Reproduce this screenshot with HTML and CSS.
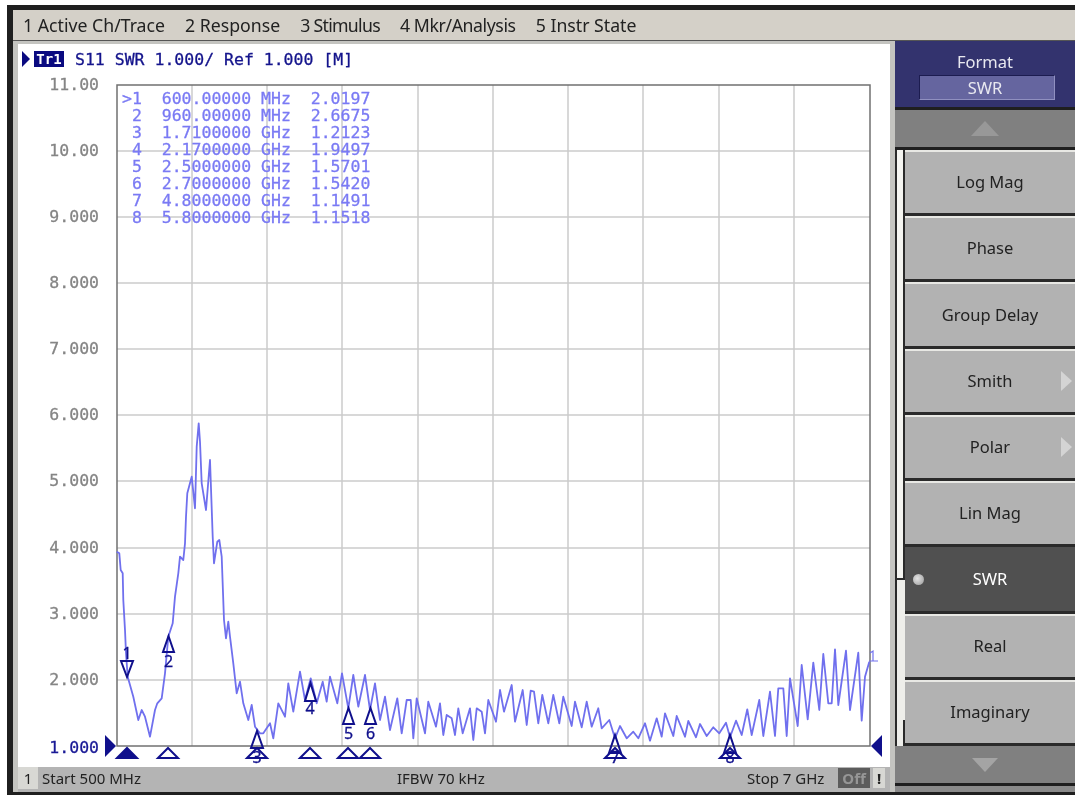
FILE: index.html
```html
<!DOCTYPE html>
<html lang="en">
<head>
    <meta charset="UTF-8">
    <meta name="viewport" content="width=device-width, initial-scale=1.0">
    <title>SWR Trace</title>
    <link rel="stylesheet" href="styles.css">
</head>
<body>
    <div class="screen">
        <nav class="menu-bar">
            <span>1 Active Ch/Trace</span>
            <span>2 Response</span>
            <span>3 Stimulus</span>
            <span>4 Mkr/Analysis</span>
            <span>5 Instr State</span>
        </nav>
        <div class="main">
            <section class="chart-panel">
                <div class="chart-area">
                    <div class="trace-title">
                        <span class="trace-arrow"></span>
                        <span class="trace-tag">Tr1</span>
                        <span class="trace-text">S11 SWR 1.000/ Ref 1.000 [M]</span>
                    </div>
                    <svg class="plot" viewBox="18 74 872 693" width="872" height="693">
                        <g class="grid">
                            <line x1="117" x2="870" y1="151" y2="151"/>
                            <line x1="117" x2="870" y1="217" y2="217"/>
                            <line x1="117" x2="870" y1="283" y2="283"/>
                            <line x1="117" x2="870" y1="349" y2="349"/>
                            <line x1="117" x2="870" y1="415" y2="415"/>
                            <line x1="117" x2="870" y1="481" y2="481"/>
                            <line x1="117" x2="870" y1="548" y2="548"/>
                            <line x1="117" x2="870" y1="614" y2="614"/>
                            <line x1="117" x2="870" y1="680" y2="680"/>
                            <line x1="192" x2="192" y1="85" y2="746"/>
                            <line x1="267" x2="267" y1="85" y2="746"/>
                            <line x1="342" x2="342" y1="85" y2="746"/>
                            <line x1="418" x2="418" y1="85" y2="746"/>
                            <line x1="493" x2="493" y1="85" y2="746"/>
                            <line x1="568" x2="568" y1="85" y2="746"/>
                            <line x1="643" x2="643" y1="85" y2="746"/>
                            <line x1="719" x2="719" y1="85" y2="746"/>
                            <line x1="794" x2="794" y1="85" y2="746"/>
                        </g>
                        <rect class="frame" x="117" y="85" width="753" height="661"/>

                        <g class="y-labels">
                            <text x="99" y="90">11.00</text>
                            <text x="99" y="156">10.00</text>
                            <text x="99" y="222">9.000</text>
                            <text x="99" y="288">8.000</text>
                            <text x="99" y="354">7.000</text>
                            <text x="99" y="420">6.000</text>
                            <text x="99" y="486">5.000</text>
                            <text x="99" y="553">4.000</text>
                            <text x="99" y="619">3.000</text>
                            <text x="99" y="685">2.000</text>
                            <text class="y-ref" x="99" y="753">1.000</text>
                        </g>

                        <g class="marker-table">
                            <text x="122" y="104">&gt;1  600.00000 MHz  2.0197</text>
                            <text x="122" y="121"> 2  960.00000 MHz  2.6675</text>
                            <text x="122" y="138"> 3  1.7100000 GHz  1.2123</text>
                            <text x="122" y="155"> 4  2.1700000 GHz  1.9497</text>
                            <text x="122" y="172"> 5  2.5000000 GHz  1.5701</text>
                            <text x="122" y="189"> 6  2.7000000 GHz  1.5420</text>
                            <text x="122" y="206"> 7  4.8000000 GHz  1.1491</text>
                            <text x="122" y="223"> 8  5.8000000 GHz  1.1518</text>
                        </g>

                        <polyline class="trace" points="116.7,551.7 119.3,553.3 120.7,570 122.7,573.3 123.3,600 125,630 126,653.3 127.7,676.7 130,685 133.3,696.7 138.3,720 141.7,710 145,716.7 150,736.7 155,710 157.3,703.3 161.7,698.3 165,673.3 168.3,636.7 172.7,623.3 175,596.7 178.3,573.3 180,556.7 183.3,560 185,543.3 186,516.7 187.3,493.3 191.7,476.7 195,508.3 196.7,446.7 198.7,423.3 200,441.7 201.7,483.3 206,510 210,460 212.7,536.7 214,563.3 217.3,541.7 219.3,540 221.7,556.7 224,620 226,638.3 228.3,621.7 230,636.7 233.3,663.3 236.7,693.3 240,681.7 243.3,703.3 248.3,720 251.7,705 255,726.7 260,733.3 263.3,733.3 270,723.3 273.3,738.3 278.3,703.3 285,716.7 288.3,683.3 293.3,711.7 300,671.7 305,700 310.7,678.3 316.7,703.3 322.7,681.7 326.7,701.7 330,676.7 337.3,703.3 342,673.3 348.3,708.3 353.3,675 358.3,706.7 365,675 370,710 375,683.3 380,720 385,696.7 390,730 397.3,698.3 401.7,733.3 406.7,700 410.7,700 413.3,738.3 416.7,698.3 425,733.3 428.3,701.7 436,726.7 440,703.3 443.3,735 446.7,715 451.7,718.3 455,735 458.3,708.3 462.7,733.3 470,708.3 473.3,740 476.7,708.3 481.7,711.7 485,733.3 488.3,700 496,721.7 500,690 504,711.7 511.7,685 515,721.7 522.7,690 526.7,725 530.7,690.7 534,691.7 538.3,723.3 542.3,695 548.3,723.3 553.3,695 559.3,723.3 563.3,696.7 571.7,726 575,701.7 581.7,727.3 586.7,701.7 591.7,726.7 598.3,708.3 601.7,728.3 609.3,720 615,738.3 620,726 626.7,738.3 633.3,731.7 638.3,738.3 645,723.3 650,740.7 656.7,718.3 661.7,736.7 665,713.3 673.3,736 676.7,716 685,736.7 688.3,721 696,737.3 700,724 706.7,736 713.3,727.3 719.3,733.3 726,722.7 730,737.3 736,720.7 741.7,735 747.3,709.3 751.7,735 759.3,700 763.3,736 770,691.7 775,736 778.3,688.3 783.3,688.3 786.7,736 790,678.3 797.7,726 801.7,665 807.7,719.3 813.3,662.7 819.3,710 823.3,654 828.3,703.3 831.7,703.3 835,649.3 838.3,705 846,650.7 850,710 858.3,652.7 861.7,720.7 865,676.7 869.3,661.7"/>
                        <path class="trace-end" d="M869 661H878M873 661V651L870 653"/>

                        <path class="ref-arrow" d="M105 735L116 746L105 757Z"/>
                        <path class="ref-arrow" d="M882 735V757L871 746Z"/>

                        <g class="markers">
                            <path class="marker-on" d="M117 758L127 748L137 758Z"/>
                            <path d="M158 758L168 748L178 758Z"/>
                            <path d="M247 758L257 748L267 758Z"/>
                            <path d="M300 758L310 748L320 758Z"/>
                            <path d="M338 758L348 748L358 758Z"/>
                            <path d="M360 758L370 748L380 758Z"/>
                            <path d="M605 758L615 748L625 758Z"/>
                            <path d="M720 758L730 748L740 758Z"/>

                            <path d="M121 661H133L127 677Z"/>
                            <path d="M163 652H174L168.500 636Z"/>
                            <path d="M251 748H263L257 731Z"/>
                            <path d="M305 701H316L310.500 683Z"/>
                            <path d="M343 724H354L348.500 708Z"/>
                            <path d="M365 724H376L370.500 708Z"/>
                            <path d="M609 753H621L615 735Z"/>
                            <path d="M724 753H736L730 735Z"/>
                        </g>
                        <g class="marker-labels">
                            <text x="127" y="659">1</text>
                            <text x="168.500" y="667">2</text>
                            <text x="257" y="763">3</text>
                            <text x="310" y="714">4</text>
                            <text x="348.500" y="739">5</text>
                            <text x="370.500" y="739">6</text>
                            <text x="615" y="763">7</text>
                            <text x="730" y="763">8</text>
                        </g>
                    </svg>
                </div>
                <footer class="status-bar">
                    <span class="channel-box">1</span>
                    <span class="status-start">Start 500 MHz</span>
                    <span class="status-ifbw">IFBW 70 kHz</span>
                    <span class="status-stop">Stop 7 GHz</span>
                    <span class="off-box">Off</span>
                    <span class="warn-box">!</span>
                </footer>
            </section>

            <aside class="softkeys">
                <div class="softkey-title">
                    <div>Format</div>
                    <div class="softkey-value">SWR</div>
                </div>
                <div class="page-button"><span class="arrow-up"></span></div>
                <div class="softkey-list">
                    <div class="scroll-strip">
                        <div class="scroll-track"></div>
                        <div class="scroll-end"></div>
                    </div>
                    <div class="softkey-column">
                        <div class="softkey">Log Mag</div>
                        <div class="softkey">Phase</div>
                        <div class="softkey">Group Delay</div>
                        <div class="softkey has-sub">Smith</div>
                        <div class="softkey has-sub">Polar</div>
                        <div class="softkey">Lin Mag</div>
                        <div class="softkey active">SWR</div>
                        <div class="softkey">Real</div>
                        <div class="softkey">Imaginary</div>
                    </div>
                </div>
                <div class="page-button"><span class="arrow-down"></span></div>
                <div class="softkey-foot"></div>
            </aside>
        </div>
    </div>
</body>
</html>
```

FILE: styles.css
```css
body {
    margin: 0;
    background-color: white;
    font-family: "Noto Sans", sans-serif;
}
.screen {
    width: 1068px;
    height: 790px;
    margin: 5px 0 0 7px;
    padding: 5px 0 3px 6px;
    box-sizing: border-box;
    background-color: #1f1f1f;
    display: flex;
    flex-direction: column;
    overflow: hidden;
    filter: blur(0.4px);
}
.menu-bar {
    height: 31px;
    flex-shrink: 0;
    background-color: #d4d0c8;
    display: flex;
    align-items: center;
    gap: 20px;
    padding-left: 10px;
    font-size: 17.700px;
    color: #222;
    border-bottom: 1px solid #555;
    box-sizing: border-box;
}
.menu-bar span:nth-child(3) {
    letter-spacing: -0.7px;
}
.menu-bar span:nth-child(4) {
    letter-spacing: -0.4px;
}
.main {
    display: flex;
    flex: 1;
    min-height: 0;
}
.chart-panel {
    width: 882px;
    flex-shrink: 0;
    box-sizing: border-box;
    padding: 3px 5px 0 5px;
    background-color: #c4c4c0;
    display: flex;
    flex-direction: column;
}
.chart-area {
    background-color: white;
    height: 723px;
}
.trace-title {
    height: 30px;
    display: flex;
    align-items: center;
    padding-left: 4px;
    font-family: "DejaVu Sans Mono", monospace;
    font-size: 16.500px;
    color: #14148c;
    -webkit-text-stroke: 0.3px #14148c;
}
.trace-arrow {
    width: 0;
    height: 0;
    border-left: 8px solid #0a0a80;
    border-top: 8px solid transparent;
    border-bottom: 8px solid transparent;
}
.trace-tag {
    background-color: #0a0a80;
    color: white;
    -webkit-text-stroke: 0;
    margin: 0 11px 0 4px;
    width: 30px;
    height: 16px;
    text-align: center;
    font-weight: bold;
    font-size: 14px;
    line-height: 16px;
}
.trace-text {
    white-space: pre;
}
.plot {
    display: block;
    overflow: visible;
}
.grid line {
    stroke: #cbcbcb;
    stroke-width: 1.500;
}
.frame {
    fill: none;
    stroke: #707070;
    stroke-width: 1.500;
}
.y-labels text {
    font-family: "DejaVu Sans Mono", monospace;
    font-size: 16.500px;
    fill: #858585;
    stroke: #858585;
    stroke-width: 0.3;
    text-anchor: end;
}
.y-labels .y-ref {
    fill: #1a1a96;
    stroke: #1a1a96;
}
.marker-table text {
    font-family: "DejaVu Sans Mono", monospace;
    font-size: 16.500px;
    fill: #7a7af4;
    stroke: #7a7af4;
    stroke-width: 0.3;
    white-space: pre;
}
.trace {
    fill: none;
    stroke: #7070ee;
    stroke-width: 1.800;
    stroke-linejoin: round;
}
.trace-end {
    fill: none;
    stroke: #7070ee;
    stroke-width: 1.200;
}
.ref-arrow {
    fill: #10108c;
}
.markers path {
    fill: none;
    stroke: #10108c;
    stroke-width: 2;
}
.markers .marker-on {
    fill: #10108c;
}
.marker-labels text {
    font-family: "Noto Sans", sans-serif;
    font-size: 16px;
    fill: #10108c;
    stroke: #10108c;
    stroke-width: 0.3;
    text-anchor: middle;
}
.status-bar {
    height: 25px;
    flex-shrink: 0;
    box-sizing: border-box;
    padding-bottom: 3px;
    display: flex;
    align-items: center;
    background-color: #b4b4b4;
    font-size: 15px;
    color: #222;
}
.channel-box {
    width: 20px;
    height: 22px;
    line-height: 22px;
    text-align: center;
    background-color: #d8d8d4;
}
.status-start {
    margin-left: 4px;
    width: 355px;
}
.status-ifbw {
    width: 350px;
}
.status-stop {
    width: 91px;
}
.off-box {
    width: 32px;
    height: 20px;
    line-height: 20px;
    text-align: center;
    background-color: #5c5c5c;
    color: #969696;
    font-weight: bold;
    margin-right: 3px;
}
.warn-box {
    width: 12px;
    height: 20px;
    line-height: 20px;
    text-align: center;
    font-weight: bold;
    background-color: #d8d8d4;
}
.softkeys {
    flex: 1;
    display: flex;
    flex-direction: column;
    gap: 3px;
    font-size: 16.500px;
}
.softkey-title {
    height: 66px;
    flex-shrink: 0;
    box-sizing: border-box;
    background-color: #33336e;
    color: #e8e8f0;
    text-align: center;
    padding-top: 9px;
    line-height: 24px;
}
.softkey-value {
    width: 136px;
    height: 25px;
    line-height: 24px;
    margin: 1px 0 0 24px;
    padding-right: 4px;
    box-sizing: border-box;
    background-color: #65659f;
    border: 1px solid #9090c0;
    border-top-color: #1c1c50;
    border-left-color: #1c1c50;
}
.page-button {
    height: 37px;
    flex-shrink: 0;
    background-color: #808080;
    display: flex;
    align-items: center;
    justify-content: center;
}
.arrow-up {
    width: 0;
    height: 0;
    border-left: 14px solid transparent;
    border-right: 14px solid transparent;
    border-bottom: 15px solid #989898;
}
.arrow-down {
    width: 0;
    height: 0;
    border-left: 13px solid transparent;
    border-right: 13px solid transparent;
    border-top: 14px solid #a4a4a4;
}
.softkey-foot {
    flex: 1;
    background-color: #8a8a8a;
}
.softkey-list {
    height: 596px;
    margin-bottom: -3px;
    flex-shrink: 0;
    display: flex;
}
.scroll-strip {
    width: 10px;
    flex-shrink: 0;
    box-sizing: border-box;
    border-left: 2px solid #2a2a2a;
    background-color: #eeeeea;
    display: flex;
    flex-direction: column;
    justify-content: space-between;
}
.scroll-track {
    height: 430px;
    box-sizing: border-box;
    border-right: 2px solid #2a2a2a;
    border-bottom: 2px solid #2a2a2a;
    background-color: #f4f4f0;
}
.scroll-end {
    height: 26px;
    box-sizing: border-box;
    border-right: 2px solid #2a2a2a;
}
.softkey-column {
    flex: 1;
    display: flex;
    flex-direction: column;
}
.softkey {
    flex: 1;
    display: flex;
    align-items: center;
    justify-content: center;
    position: relative;
    background-color: #b2b2b2;
    color: #222;
    border-top: 2px solid #e8e8e4;
    border-bottom: 3px solid #2a2a2a;
    padding-bottom: 2px;
    box-sizing: border-box;
}
.softkey.has-sub::after {
    content: "";
    position: absolute;
    right: 3px;
    top: 50%;
    margin-top: -10px;
    border-left: 11px solid #d4d4d4;
    border-top: 10px solid transparent;
    border-bottom: 10px solid transparent;
}
.softkey.active {
    background-color: #505050;
    border-top-color: #505050;
    color: white;
}
.softkey.active::before {
    content: "";
    position: absolute;
    left: 8px;
    top: 50%;
    margin-top: -6px;
    width: 11px;
    height: 11px;
    border-radius: 50%;
    background: radial-gradient(circle at 40% 40%, #e4e4e4, #989898);
}
```
